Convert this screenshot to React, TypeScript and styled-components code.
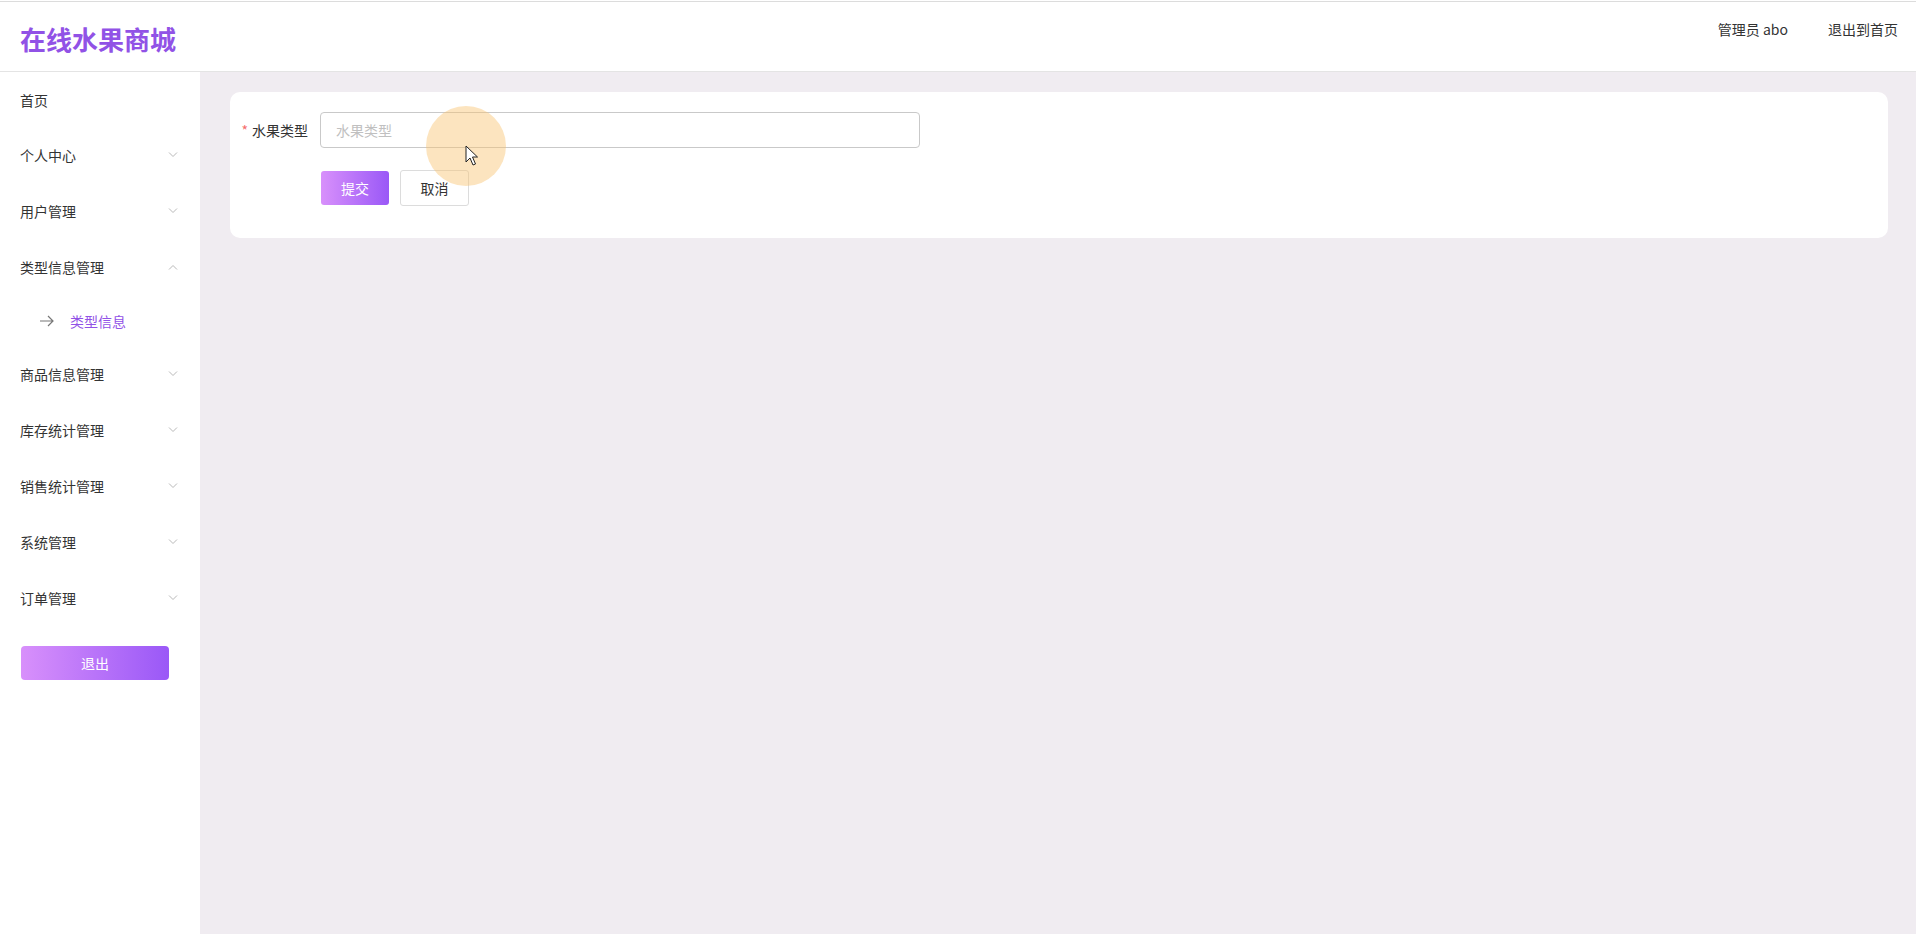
import React from "react";
import styled, { createGlobalStyle } from "styled-components";

const GlobalStyle = createGlobalStyle`
  html, body { margin: 0; padding: 0; }
  body {
    font-family: "Noto Sans CJK SC", "Noto Sans", "Liberation Sans", sans-serif;
    color: #333;
    background: #f0ecf1;
  }
  * { box-sizing: border-box; }
`;

const Page = styled.div`
  display: flex;
  flex-direction: column;
  height: 934px;
  overflow: hidden;
`;

const Header = styled.header`
  height: 72px;
  flex-shrink: 0;
  background: #fff;
  border-top: 1px solid #fff;
  box-shadow: inset 0 1px 0 #dcdcdc;
  border-bottom: 1px solid #e4e4e4;
  display: flex;
  align-items: center;
  justify-content: space-between;
  padding: 0 18px 0 20px;
`;

const Logo = styled.div`
  font-size: 26px;
  font-weight: 700;
  color: #9152e6;
  letter-spacing: 0;
  line-height: 1;
  margin-top: 5px;
`;

const HeaderLinks = styled.div`
  display: flex;
  gap: 40px;
  font-size: 14px;
  color: #333;
  margin-top: -15px;
`;

const Body = styled.div`
  flex: 1;
  display: flex;
  min-height: 0;
`;

const Sidebar = styled.aside`
  width: 200px;
  flex-shrink: 0;
  background: #fff;
  display: flex;
  flex-direction: column;
  padding-bottom: 2px;
`;

const MenuItem = styled.div<{ $sub?: boolean; $active?: boolean; $first?: boolean }>`
  height: ${(p) => (p.$sub ? "51px" : p.$first ? "55px" : "56px")};
  display: flex;
  align-items: center;
  justify-content: space-between;
  padding: ${(p) => (p.$sub ? "0 0 0 40px" : "0 22px 0 20px")};
  font-size: 14px;
  color: ${(p) => (p.$active ? "#9152e6" : "#333")};
`;

const SubLabel = styled.span`
  display: flex;
  align-items: center;
  gap: 16px;
`;

const LogoutButton = styled.button`
  margin: 20px 0 0 21px;
  width: 148px;
  height: 34px;
  border: none;
  border-radius: 4px;
  background: linear-gradient(90deg, #d890fb 0%, #9a58f7 100%);
  color: #fff;
  font-size: 14px;
  font-family: inherit;
`;

const Main = styled.main`
  flex: 1;
  padding: 20px 28px 0 30px;
  position: relative;
`;

const Card = styled.section`
  background: #fff;
  border-radius: 10px;
  padding: 20px 0 32px;
`;

const FormRow = styled.div`
  display: flex;
  align-items: center;
`;

const Label = styled.label`
  width: 90px;
  padding-right: 12px;
  text-align: right;
  font-size: 14px;
  color: #333;
`;

const Star = styled.span`
  color: #f56c6c;
  margin-right: 4px;
`;

const Input = styled.input`
  width: 600px;
  height: 36px;
  border: 1px solid #c9c9c9;
  border-radius: 4px;
  padding: 0 15px;
  font-size: 14px;
  font-family: inherit;
  color: #333;
  outline: none;
  &::placeholder { color: #c0c0c0; }
`;

const Actions = styled.div`
  display: flex;
  gap: 11px;
  margin: 23px 0 0 91px;
`;

const Btn = styled.button<{ $primary?: boolean }>`
  width: ${(p) => (p.$primary ? "68px" : "69px")};
  height: ${(p) => (p.$primary ? "34px" : "36px")};
  margin-top: ${(p) => (p.$primary ? "0" : "-1px")};
  border-radius: 3px;
  font-size: 14px;
  font-family: inherit;
  border: ${(p) => (p.$primary ? "none" : "1px solid #dcdcdc")};
  background: ${(p) =>
    p.$primary ? "linear-gradient(90deg, #d890fb 0%, #9a58f7 100%)" : "#fff"};
  color: ${(p) => (p.$primary ? "#fff" : "#333")};
`;

const ClickHalo = styled.div`
  position: absolute;
  left: 226px;
  top: 34px;
  width: 80px;
  height: 80px;
  border-radius: 50%;
  background: rgba(249, 196, 112, 0.45);
  pointer-events: none;
`;

const Cursor = styled.svg`
  position: absolute;
  left: 265px;
  top: 73px;
  pointer-events: none;
`;

const Chevron = ({ up }: { up?: boolean }) => (
  <svg width="10" height="6" viewBox="0 0 10 6" fill="none">
    <path
      d={up ? "M1 5.5 L5 1.5 L9 5.5" : "M1 0.5 L5 4.5 L9 0.5"}
      stroke="#b8b8b8"
      strokeWidth="1"
    />
  </svg>
);

const Arrow = () => (
  <svg width="14" height="12" viewBox="0 0 14 12" fill="none">
    <path d="M0 6 H13 M8 1 L13 6 L8 11" stroke="#777" strokeWidth="1.2" />
  </svg>
);

const menus = [
  { name: "个人中心" },
  { name: "用户管理" },
  { name: "类型信息管理", open: true, children: ["类型信息"] },
  { name: "商品信息管理" },
  { name: "库存统计管理" },
  { name: "销售统计管理" },
  { name: "系统管理" },
  { name: "订单管理" },
];

export default function App() {
  return (
    <>
      <GlobalStyle />
      <Page>
        <Header>
          <Logo>在线水果商城</Logo>
          <HeaderLinks>
            <span>管理员 abo</span>
            <span>退出到首页</span>
          </HeaderLinks>
        </Header>
        <Body>
          <Sidebar>
            <MenuItem $first>首页</MenuItem>
            {menus.map((m) => (
              <React.Fragment key={m.name}>
                <MenuItem>
                  <span>{m.name}</span>
                  <Chevron up={m.open} />
                </MenuItem>
                {m.open &&
                  m.children?.map((c) => (
                    <MenuItem $sub $active key={c}>
                      <SubLabel>
                        <Arrow />
                        {c}
                      </SubLabel>
                    </MenuItem>
                  ))}
              </React.Fragment>
            ))}
            <LogoutButton>退出</LogoutButton>
          </Sidebar>
          <Main>
            <Card>
              <FormRow>
                <Label>
                  <Star>*</Star>水果类型
                </Label>
                <Input placeholder="水果类型" />
              </FormRow>
              <Actions>
                <Btn $primary>提交</Btn>
                <Btn>取消</Btn>
              </Actions>
            </Card>
            <ClickHalo />
            <Cursor width="14" height="22" viewBox="0 0 14 22">
              <path
                d="M1 1 L1 17 L5 13 L8 20 L10.5 19 L7.5 12 L12.5 12 Z"
                fill="#fff"
                stroke="#222"
                strokeWidth="1"
                strokeLinejoin="round"
              />
            </Cursor>
          </Main>
        </Body>
      </Page>
    </>
  );
}
